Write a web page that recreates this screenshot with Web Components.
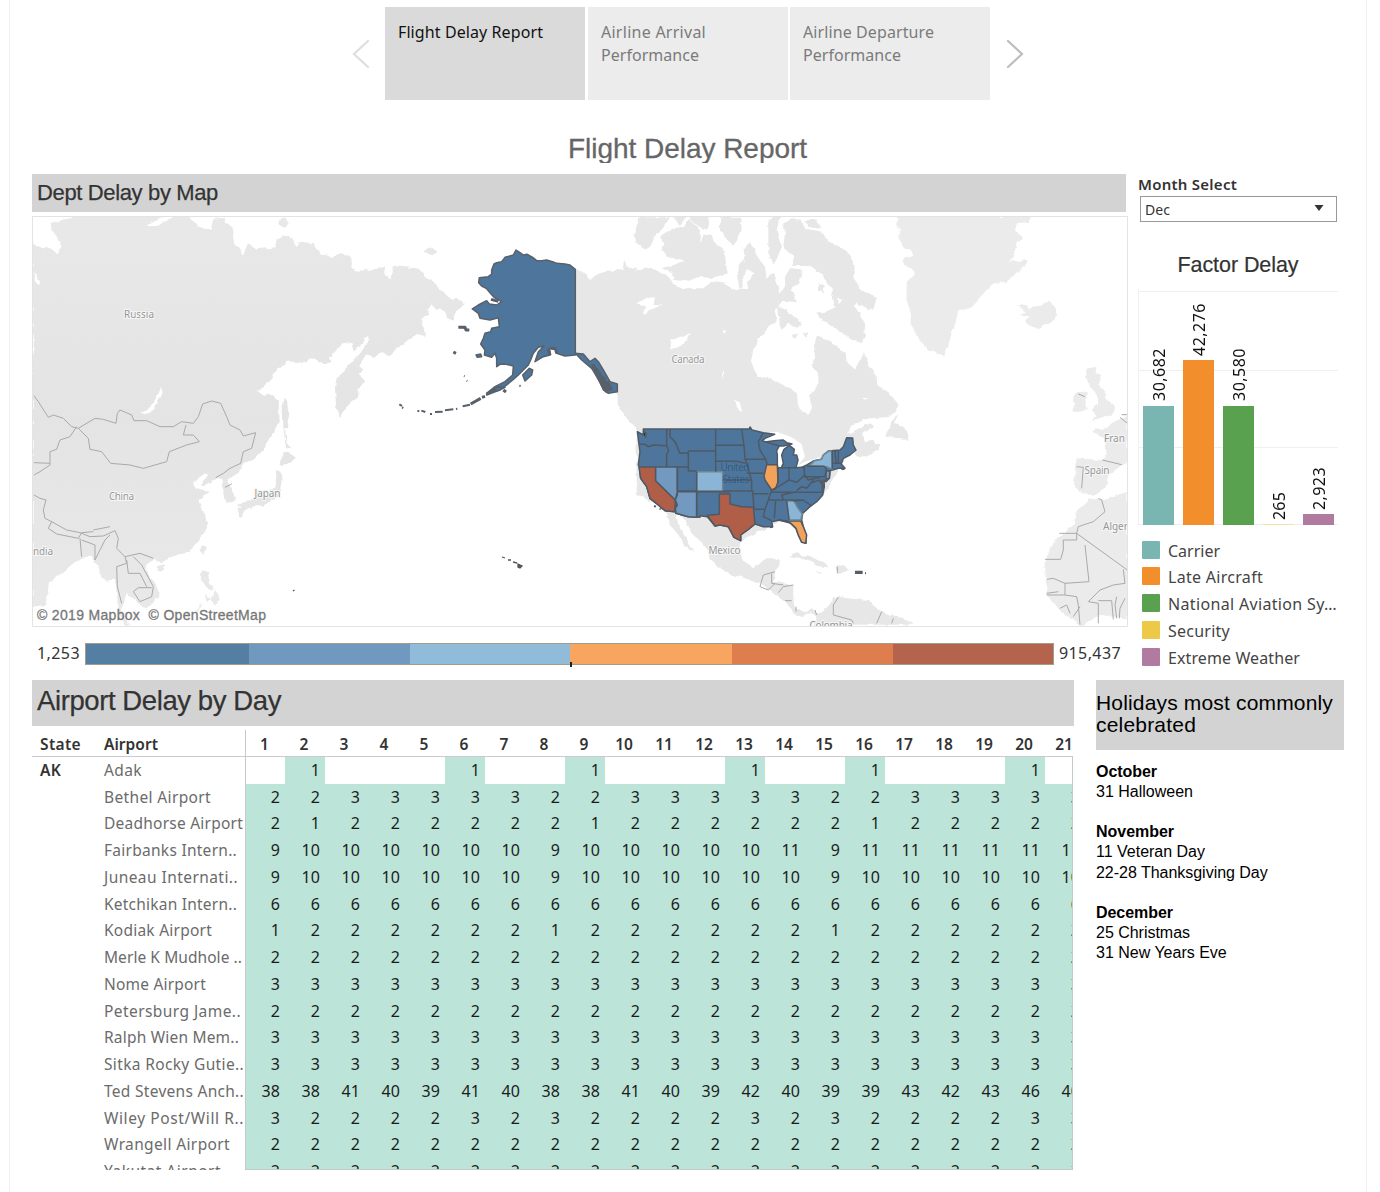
<!DOCTYPE html>
<html lang="en">
<head>
<meta charset="utf-8">
<title>Flight Delay Report</title>
<style>
html,body{margin:0;padding:0;background:#fff}
body{width:1380px;height:1192px;overflow:hidden;font-family:"Noto Sans","Open Sans",sans-serif;color:#333}
</style>
</head>
<body>
<delay-dashboard></delay-dashboard>
<script>
const mk = (name, html, after) => customElements.define(name, class extends HTMLElement {
  connectedCallback() {
    if (this.shadowRoot) return;
    const root = this.attachShadow({ mode: 'open' });
    root.innerHTML = typeof html === 'function' ? html(this) : html;
    if (after) after(this, root);
  }
});

/* Single-line text tracked so that it fills a given width */
const ctx = document.createElement('canvas').getContext('2d');
mk('fit-text', '<style>:host{display:inline-block;white-space:pre}</style><slot></slot>', el => {
  const s = getComputedStyle(el), t = el.textContent;
  ctx.font = `${s.fontWeight} ${s.fontSize} ${s.fontFamily}`;
  el.style.letterSpacing = ((+el.getAttribute('w') - ctx.measureText(t).width) / t.length).toFixed(3) + 'px';
});

mk('story-tab', `<style>
:host{display:block;box-sizing:border-box;width:200px;height:93px;padding:14px 13px;background:#ececec;color:#7b7b7b;font-size:16px;line-height:23px}
:host([active]){background:#dadada;color:#111}
::slotted(*){display:block!important}
</style><slot></slot>`);

mk('story-nav', `<style>
:host{display:flex;height:93px;padding:7px 0 0 342px}
svg{width:20px;height:32px;margin-top:31px;fill:none;stroke-width:2.2;stroke-linecap:round}
.l{stroke:#dedede;margin-right:13px}.r{stroke:#bdbdbd;margin-left:14px}
.g3{margin-left:3px}.g2{margin-left:2px}
</style>
<svg class="l" viewBox="0 0 20 32"><path d="M16 3 2 16 16 29"/></svg>
<story-tab active><fit-text w="145">Flight Delay Report</fit-text></story-tab>
<story-tab class="g3"><fit-text w="105">Airline Arrival</fit-text><fit-text w="98">Performance</fit-text></story-tab>
<story-tab class="g2"><fit-text w="131">Airline Departure</fit-text><fit-text w="98">Performance</fit-text></story-tab>
<svg class="r" viewBox="0 0 20 32"><path d="M4 3 18 16 4 29"/></svg>`);

mk('section-bar', `<style>
:host{display:block;box-sizing:border-box;background:#d3d3d3;color:#333;padding-left:5px;font-family:"Liberation Sans",Arial,sans-serif;-webkit-text-stroke:.25px #333}
</style><slot></slot>`);

/* Map geometry is drawn at 3 units per pixel */
const LAND = `
M130 18 L122 27 95 33 62 38 65 62 85 85 95 110 85 137 70 118 50 112 38 122 12 100 8 110 8 1190 45 1185 55 1150 60 1115 95 1090 130 1060 160 1042 185 1040 195 1055 210 1080 218 1105 235 1115 250 1105 262 1130 262 1200 285 1244 300 1244 272 1205 290 1150 310 1165 335 1190 350 1195 385 1160 385 1130 360 1105 345 1080 355 1055 372 1047 380 1055 395 1060 410 1045 445 1035 480 1025 500 1000 520 970 535 940 525 925 520 900 505 870 540 845 500 840 487 818 525 790 535 795 514 820 516 832 556 805 580 812 575 825 583 850 590 880 612 880 618 866 605 835 592 818 600 805 630 785 640 760 670 750 700 720 730 670 748 630 750 575 712 548 700 555 685 545 725 505 745 475 770 455 830 455 840 445 860 448 870 460 905 458 900 440 945 395 965 400 970 422 1000 400 1003 380 1015 378 1015 390 990 430 960 465 930 490 915 530 918 590 930 620 945 605 955 585 985 560 985 540 1002 515 990 495 1000 480 988 465 1010 435 1030 440 1060 428 1080 438 1120 400 1160 372 1185 378 1180 345 1172 325 1198 318 1192 300 1205 283 1215 298 1240 300 1255 325 1275 332 1275 305 1305 285 1280 260 1265 272 1240 245 1210 215 1160 175 1125 172 1088 168 1088 190 1078 205 1065 195 1062 180 1070 168 1060 175 985 182 965 175 960 145 940 130 905 138 870 135 850 100 810 95 800 108 785 85 760 75 740 88 735 112 680 118 652 102 638 140 615 95 608 50 585 38 580 25 560 22 552 30 545 60 500 45 480 20 440 18 405 32 385 48 355 48 375 32 400 18z
M748 30 765 25 776 42 760 50 745 42z M1180 125 1195 113 1215 118 1218 130 1195 135z
M765 560 772 580 778 655 765 655 770 700 785 715 768 715 760 650 758 590z
M762 725 775 730 798 742 780 760 755 765 748 760z M742 780 755 785 758 820 745 860 700 888 660 890 640 905 625 885 660 868 690 865 715 850 735 825z M622 893 642 895 640 920 630 925z M655 885 675 880 665 895z
M520 1005 530 1010 522 1035 512 1025z M385 1070 405 1065 395 1085 383 1080z M515 1085 537 1085 535 1115 550 1140 525 1130 512 1115z M525 1155 545 1165 530 1180z M555 1140 568 1160 560 1185 545 1170z M480 1215 520 1180 510 1195z`;

const AMERICA = `
M500 170 L555 178 580 185 605 208 620 190 650 182 700 180 705 152 720 175 740 170 740 185 765 172 790 178 835 200 855 225 885 235 940 235 965 215 1000 220 1030 238 1068 240 1075 215 1090 190 1065 175 1062 120 1080 95 1105 145 1125 170 1130 205 1150 190 1155 210 1170 248 1185 230 1185 200 1200 175 1235 178 1230 215 1205 240 1215 265 1225 280 1180 275 1155 300 1160 335 1135 350 1110 380 1090 420 1082 460 1105 500 1140 505 1190 530 1220 545 1225 590 1255 615 1263 600 1260 560 1285 525 1285 500 1265 465 1275 440 1272 400 1285 380 1315 390 1350 415 1368 430 1370 460 1395 475 1422 430 1440 470 1460 500 1462 525 1500 550 1522 575 1522 605 1490 622 1440 625 1390 642 1370 675 1380 668 1440 640 1452 648 1420 672 1425 700 1450 690 1455 705 1475 705 1465 715 1430 740 1408 745 1400 735 1390 715
L1350 770 1300 860 1230 910 1240 960 1180 930 1055 990 1048 1020 1060 1055 1090 1075 1115 1060 1125 1048 1170 1048 1168 1065 1155 1085 1152 1115 1210 1125 1210 1170 1215 1195 1240 1210 1265 1195 1285 1210 1280 1222 1260 1205 1240 1222 1215 1215 1180 1170 1145 1145 1115 1120 1065 1105 1030 1095 990 1075 960 1050 955 1025 935 1000 905 970 885 930 870 915 855 905 865 940 900 1005 912 1028 885 1010 870 980 840 945 830 905 740 850 740 665 700 610 680 580 680 550 600 450 540 430z
M750 22 L840 22 820 55 795 75 780 110 765 120 735 95 730 75z M810 80 850 55 880 50 900 30 930 60 935 100 945 70 960 75 975 100 1000 120 1005 160 1010 190 965 205 925 200 900 215 850 210 850 190 815 175 885 155 830 140 815 120 820 100z M850 22 890 20 870 45z M895 20 960 20 950 60 920 45z M990 20 1050 20 1055 60 1030 110 1015 90 990 60z M1040 185 1060 150 1070 170 1055 240 1045 220z M1135 35 1150 20 1170 20 1160 60 1175 120 1150 165 1135 130z
M1180 40 1205 25 1235 30 1245 55 1295 65 1315 90 1380 130 1395 180 1390 200 1415 240 1460 265 1450 290 1435 300 1400 280 1395 290 1420 330 1425 375 1415 400 1380 385 1335 355 1285 325 1278 305 1310 310 1335 290 1325 240 1295 190 1255 165 1210 165 1215 140 1180 110 1185 70z M1245 30 1275 30 1295 55 1255 50z
M1165 290 1190 300 1240 345 1210 350 1195 340 1170 360z M1205 375 1225 370 1215 388z M1285 222 1305 225 1300 248 1282 240z M1240 375 1255 365 1250 382z
M1525 612 1515 640 1550 660 1558 690 1530 685 1490 680 1500 640z
M1195 1040 1215 1028 1270 1040 1310 1062 1315 1072 1285 1068 1245 1045z M1335 1070 1360 1068 1380 1080 1345 1092z M1275 1087 1295 1087 1290 1092z
M1330 1165 1345 1160 1370 1165 1440 1170 1460 1195 1490 1210 1540 1225 1570 1244 1275 1244 1285 1210 1310 1190z`;

const ATLANTIC = `
M470 18 L480 60 475 80 495 115 515 120 520 135 485 145 490 160 515 175 525 195 500 215 500 270 515 320 515 350 540 390 565 420 612 440 625 405 635 370 650 330 655 300 690 295 740 240 755 225 800 215 855 165 860 150 808 155 825 125 830 95 850 85 825 65 830 40 870 35 875 18z
M835 285 L865 285 865 300 885 290 925 278 950 290 952 315 930 335 895 355 865 345 855 330 865 318 840 318 860 305z
M1045 475 L1070 470 1065 490 1085 495 1075 525 1095 545 1100 570 1125 590 1115 615 1085 625 1050 635 1070 615 1055 600 1075 580 1065 545 1050 535 1045 510 1038 500z M1015 545 1040 545 1040 600 1000 608 995 600 1010 580 998 570z
M1162 612 L1140 625 1115 640 1100 655 1060 660 1065 672 1095 680 1100 735 1090 750 1010 745 1005 775 1002 835 1045 855 1075 850 1105 820 1105 795 1140 770 1162 760z
M1162 845 L1100 868 1045 865 1010 905 1000 945 950 985 925 1030 915 1060 920 1155 950 1190 975 1215 1020 1244 1030 1244 1080 1215 1162 1225z`;

const BORDERS = `
M12 557 L25 575 55 622 70 615 100 625 125 650 145 655 195 625 220 628 258 640 262 610 270 600 305 615 312 632 350 632 390 650 430 650 455 635 490 640 505 620 518 582 545 573 572 580 590 620 600 645 630 660 640 678 677 668 665 715 640 725 632 760 600 775 580 790 557 803
M145 655 L175 685 180 718 215 725 242 760 300 765 340 775 410 755 418 725 470 705 508 695 490 675 460 675 468 645
M140 650 L120 680 90 690 80 718 60 725 60 765 30 785 12 795 M12 758 60 760 M585 832 605 822
M12 855 L30 865 48 870 40 900 45 925 65 935 110 960 150 968 180 980 220 978 255 962 265 985 260 1015 285 1040 330 1030 370 1045
M65 935 L55 955 80 972 145 985 155 968 190 965 M150 985 L155 1040 M155 990 195 1005 195 1050 225 990 240 975 M190 960 240 950
M285 1040 L290 1060 260 1070 262 1130 275 1180 M290 1050 295 1090 330 1090 350 1130 M310 1040 335 1065 370 1130 365 1160 330 1175 310 1145 325 1133 365 1133`;
const WBORDERS = `
M958 970 L1010 970 1010 990 970 990 970 1020 962 1048 915 1048 M1010 970 L1015 950 1060 935 1095 905 1085 870 1075 865 M1010 970 L1162 1080 M1035 1005 L1047 1115 975 1120 940 1105 920 1108 M975 1120 L975 1155 920 1155 M975 1155 L1010 1160 1015 1185 1020 1244 M1045 1175 L1080 1140 1120 1125 1155 1120 1150 1078 M1045 1175 1075 1180 1075 1240 M1075 1172 1115 1172 1120 1228 M1130 1160 L1125 1185 1130 1225 M1155 1165 1140 1195 1138 1225 M920 1150 955 1145 M960 1195 980 1185 990 1210 M1000 1220 1020 1190
M1010 770 1030 772 1025 835 M1087 750 1145 764 M1140 622 1162 640 M1145 614 1162 614 M1015 552 1035 560
M295 1162 L280 1185 280 1215 335 1230 340 1240 M425 1205 L410 1240 M460 1225 455 1240 M292 1070 V1090
M105 1085 70 1095 60 1130 85 1140 105 1120 M95 1090 95 1120 130 1125 M115 1148 130 1130 160 1125 M135 1172 155 1172 M168 1190 168 1205 M225 1200 230 1215`;

mk('delay-map', `<style>
:host{display:block;box-sizing:border-box;width:1096px;height:411px;border:1px solid #e3e3e3}
svg{display:block;width:1094px;height:409px}
.lb text{font:10px "Noto Sans",sans-serif;fill:#969696;stroke:#f6f6f6;stroke-width:2px;paint-order:stroke;text-anchor:middle}
</style>
<svg viewBox="33 217 1094 409">
<defs>
<filter id="coast" x="0" y="0" width="100%" height="100%"><feTurbulence type="fractalNoise" baseFrequency=".13" numOctaves="2" seed="4"/><feDisplacementMap in="SourceGraphic" scale="5" xChannelSelector="R" yChannelSelector="G"/></filter>
<filter id="edge"><feTurbulence type="fractalNoise" baseFrequency=".3" numOctaves="2" seed="7"/><feDisplacementMap in="SourceGraphic" scale="4" xChannelSelector="R" yChannelSelector="G"/></filter>
<linearGradient id="asia" x2="0" y2="1"><stop offset="0" stop-color="#e8e8e8"/><stop offset=".5" stop-color="#e4e4e4"/><stop offset="1" stop-color="#e9e9e9"/></linearGradient>
</defs>
<g filter="url(#coast)"><rect x="33" y="217" width="1094" height="409" fill="#fff"/><g transform="translate(30 210) scale(.33333)">
<path fill="url(#asia)" d="${LAND}"/>
<g fill="#fff"><path d="M393 530 398 550 375 595 345 612 328 610 360 590 378 565z M10 190 30 210 28 228 15 210z"/></g>
<g transform="translate(1080 0)"><path fill="#e7e7e7" d="${AMERICA}"/>
<path fill="#fff" d="M740 280 765 265 795 262 790 285 818 285 785 300 765 315 755 310 770 290z M838 385 868 385 900 372 885 395 870 410 845 418z M1000 360 1012 362 1005 372z M1035 570 1045 575 1055 605 1040 590z M995 485 1002 490 998 505z M650 565 660 570 665 605 655 600z M1340 262 1360 270 1350 282z M1415 560 1435 562 1425 566z"/></g>
<g transform="translate(2130 0)"><path fill="#ebebeb" d="${ATLANTIC}"/></g>
</g></g>
<g transform="translate(30 210) scale(.33333)" fill="none" stroke="#a9a9a9" stroke-width="3" stroke-linejoin="round">
<path filter="url(#edge)" d="${BORDERS}"/><path transform="translate(2130 0)" d="${WBORDERS}"/></g>

<g transform="translate(390 210) scale(.33333)" fill="#4e769c" stroke="#58606a" stroke-width="4.500" stroke-linejoin="round">
<path d="M556 178 540 165 525 162 500 160 490 156 470 150 455 152 440 152 428 142 420 138 412 133 400 135 390 128 378 120 370 135 345 142 335 155 320 158 312 162 305 180 305 192 295 200 268 203 266 218 275 228 290 236 300 248 312 262 335 275 320 285 298 282 290 272 265 285 247 297 265 310 270 325 300 330 325 323 328 350 305 355 302 365 285 370 280 385 272 402 285 420 283 435 305 442 315 430 320 445 320 470 330 463 345 462 370 468 368 495 345 515 315 530 290 550 310 545 330 540 350 525 370 508 385 495 400 480 415 465 422 450 430 430 445 412 462 408 445 425 435 455 460 440 480 435 478 415 495 415 500 430 525 438 556 435z"/>
<path d="M556 430 580 432 600 455 615 445 625 455 640 480 660 515 682 522 682 545 655 550 640 540 630 515 605 475 575 450z"/>
<path d="M398 495 418 475 428 480 425 495 405 513z M258 435 272 432 275 440 262 442z M290 552 325 530 345 532 325 542 290 555z"/>
<path fill="none" stroke-width="12" d="M608 462 622 495 638 525 652 545 M620 480 640 515 660 540 M615 475 632 500 645 530"/>
<path stroke-width="9" d="M618 475 635 510 M628 488 645 540 M640 500 655 542 M652 515 665 540 M303 268 325 274 M205 352 225 352 228 360 238 360 M190 426 198 430 M242 582 272 565 M276 562 285 559 M290 552 318 538 M340 540 348 546 M476 418 480 436 M497 418 500 430 M482 415 497 416"/>
<path stroke-width="6" d="M28 583 36 588 M36 592 40 594 M82 602 88 604 M94 602 106 606 M120 612 126 612 M135 606 158 605 M165 601 190 598 M198 597 202 596 M218 589 240 584 M222 498 224 499 M230 512 232 513 M388 527 392 528"/>
</g>
<g transform="translate(620 400) scale(.33333)">
<g fill="#fff"><path d="M405 122 440 98 470 95 515 112 545 132 555 170 530 200 480 210 460 180 470 140z"/><path d="M525 200 555 185 600 172 600 190 545 208z"/></g>
<g stroke="#4f5964" stroke-width="4.5" stroke-linejoin="round">
<path id="us" fill="#4e769c" d="M70 87 388 87 390 81 396 90 430 98 464 103 435 115 427 122 445 128 470 133 478 138 470 152 472 165 472 192 473 203 484 203 490 190 485 165 492 148 508 136 523 148 520 165 530 165 534 180 528 203 545 202 562 194 582 182 605 178 610 165 625 153 660 150 670 140 680 113 698 114 700 135 708 150 690 165 670 175 664 192 675 205 655 205 630 212 628 235 618 245 612 240 613 260 608 285 590 305 570 320 548 340 545 360 550 380 558 405 558 430 545 425 535 405 528 385 510 368 480 360 455 365 458 380 430 380 405 372 385 388 362 405 362 422 342 412 325 380 300 375 285 378 262 350 240 347 240 352 205 350 168 340 165 335 135 332 115 315 90 295 80 260 62 235 58 200 55 195 60 155 52 95 70 105z"/>
<path fill="#4e769c" d="M440 125 462 122 490 120 500 128 516 132 490 138 480 138 460 133z"/>
<path fill="#b15e48" d="M57 201 107 201 107 242 166 300 165 335 135 332 115 315 90 295 80 260 62 235z"/>
<path fill="#7299c0" d="M107 201 172 201 172 285 166 300 107 242z M172 275 230 275 230 352 205 350 168 340 166 325 172 315 166 300z"/>
<path fill="#8ab5d6" stroke="#6f8794" d="M230 215 308 215 308 272 230 272z"/>
<path fill="#b15e48" d="M298 282 330 282 330 312 365 320 400 322 403 350 405 372 385 388 362 405 362 422 342 412 325 380 300 375 285 378 262 346 298 343z"/>
<path fill="#f3a25a" d="M440 194 472 194 474 245 466 268 455 270 435 240 432 228z M476 360 508 363 542 362 550 380 560 405 557 430 545 427 535 405 528 385 510 368z"/>
<path fill="#8ab5d6" stroke="#6f8794" d="M500 303 522 303 532 322 547 342 542 360 507 360z M568 197 584 182 605 178 610 165 625 154 635 152 637 208 620 200z"/>
<path fill="#7299c0" d="M618 213 630 212 628 235 618 238z"/>
<path fill="none" d="M58 133 75 133 85 140 100 135 140 137 M140 87V137L146 152 140 165V200 M172 201H205 M150 87V110L165 125 180 160 205 158 M205 153H285 M205 153V213H230 M287 87V215 M287 136H370 M287 184H350L376 190 M365 87 372 136 375 178H437 M430 98 415 125 420 150 437 178 442 194 M380 220H430 M308 240H392 M376 178 385 205 395 245V275 M172 273H230 M308 273H400 M172 273V200 M230 215V350 M230 275H330 M398 275 402 325 M400 328H435 M398 281H445 M455 270 445 300 435 328 430 350 455 362 M445 300H550 M452 277H608 M467 300 463 355 M500 303 507 360 M474 203V250 M507 203V240 M455 270 480 257 507 240 530 247 555 225 M553 200V230H615 M528 203H484 M560 199H612L620 208 615 228 M637 152V208 M655 150V190 M637 190H664 M645 152 648 190 M520 303 550 300 575 318 M530 272 545 260 560 265 580 240 M555 225 565 240 600 232 M570 250 598 240 612 265 M490 300 485 285 530 275 M605 238 610 262 M545 202 555 205"/>
</g>
<g stroke="#565d65" stroke-width="6"><path d="M70 94 78 100 76 114 M102 318 108 320 M120 325 122 329 M606 240 608 275 M664 207 674 207 M705 515H728M705 519H728M735 520H738 M450 382 458 380"/></g>
</g>
<g fill="#555" stroke="#555" stroke-width="1.300"><path d="M502 557 505 558M508 560 511 560M513 562 517 563M518 564 522 566 520 568 518 567z M293 591 294.500 590"/></g>
<g class="lb">
<text x="139" y="318" textLength="30">Russia</text><text x="121.500" y="500" textLength="25">China</text><text x="267.500" y="497" textLength="26">Japan</text>
<text x="43" y="555" textLength="20">ndia</text><text x="688" y="363" textLength="33">Canada</text><text x="724.500" y="554" textLength="32">Mexico</text>
<text x="1097" y="474" textLength="25">Spain</text><text style="text-anchor:start" x="1104" y="442">Fran</text><text style="text-anchor:start" x="1103" y="530">Alger</text><text x="831" y="629" textLength="43">Colombia</text>
<g style="opacity:.7"><text style="fill:#2d5577;stroke:none" x="735" y="471" textLength="29">United</text><text style="fill:#2d5577;stroke:none" x="736" y="483" textLength="27">States</text></g></g>
<text x="37" y="620" textLength="229" style="font:14px 'Liberation Sans',Arial,sans-serif;white-space:pre" fill="#777" stroke="#777" stroke-width=".3">© 2019 Mapbox  © OpenStreetMap</text>
</svg>`);

mk('color-scale', `<style>
:host{display:flex;height:22px;font-size:16px;line-height:20px;padding:16px 0 0 5px}
.ramp{display:grid;grid-template-columns:163px 161px 160px 162px 161px 160px;grid-template-rows:20px;box-sizing:border-box;width:969px;height:22px;border:1px solid #a59c90;margin:0 5px}
.tick{width:1.5px;background:#222;height:5px;margin-top:18px}
i{display:flow-root}
</style><fit-text w="43">1,253</fit-text><div class="ramp">
<i style="background:#557ea3"></i><i style="background:#7199bf"></i><i style="background:#90bcda"></i><i style="background:#f8a65f"><div class="tick"></div></i><i style="background:#de7d4e"></i><i style="background:#b4644c"></i></div><fit-text w="62">915,437</fit-text>`);

mk('month-select', `<style>
:host{display:block;height:48px}
b{display:block;font-size:15px;font-weight:600;line-height:21px;height:22px}
div{box-sizing:border-box;width:197px;height:26px;margin-left:2px;border:1px solid #999;display:flex;justify-content:space-between;align-items:center;padding:1px 12px 0 4px;font-size:14px;line-height:24px}
svg{width:10px;height:6px;margin-top:-3px}
</style><b><fit-text w="99">Month Select</fit-text></b><div><fit-text w="25">Dec</fit-text><svg viewBox="0 0 10 6"><path fill="#333" d="M.5 0h9L5 6z"/></svg></div>`);

mk('factor-chart', () => `<style>
:host{display:block;width:200px;height:236px;margin-top:11px}
.plot{display:flex;align-items:flex-end;gap:9px;box-sizing:border-box;height:236px;padding-left:4px;border-left:1px solid #f1f1f1;
background:linear-gradient(#efefef,#efefef) 0 2px/100% 1px no-repeat,linear-gradient(#efefef,#efefef) 0 81px/100% 1px no-repeat,linear-gradient(#efefef,#efefef) 0 158px/100% 1px no-repeat,linear-gradient(#efefef,#efefef) 0 235px/100% 1px no-repeat}
.c{width:31px;display:flex;flex-direction:column;align-items:center}
.v{writing-mode:vertical-rl;transform:rotate(180deg);font-size:16px;line-height:22px;color:#111;margin-bottom:4px}
.b{width:31px}
</style><div class="plot">${[['30,682',53,119.5,'#79b6b1'],['42,276',53,165,'#f28e2c'],['30,580',53,119.5,'#59a14f'],['265',28,1,'#f4e3a8'],['2,923',43,11,'#b07aa1']]
.map(([v,w,h,c]) => `<div class="c"><fit-text class="v" w="${w}">${v}</fit-text><div class="b" style="height:${h}px;background:${c}"></div></div>`).join('')}</div>`);

mk('factor-legend', () => `<style>
:host{display:block;padding:12.500px 0 0 4px}
div{display:flex;height:26.75px;font-size:16px;line-height:27.500px;gap:8px;color:#444}
i{width:18px;height:18px;border-radius:1px;margin-top:3px}
</style>${[['#79b6b1','Carrier',52],['#f28e2c','Late Aircraft',95],['#59a14f','National Aviation Sy…',169],['#edc948','Security',62],['#b07aa1','Extreme Weather',132]]
.map(([c,t,w]) => `<div><i style="background:${c}"></i><fit-text w="${w}">${t}</fit-text></div>`).join('')}`);

const rep = n => Array(21).fill(n);
const ROWS = [
['Adak',38,rep('').map((v,i)=>[1,5,8,12,15,19].includes(i)?1:'')],
['Bethel Airport',107,[2,2,3,3,3,3,3,2,2,3,3,3,3,3,2,2,3,3,3,3,3]],
['Deadhorse Airport',139,[2,1,2,2,2,2,2,2,1,2,2,2,2,2,2,1,2,2,2,2,2]],
['Fairbanks Intern..',133,[9,10,10,10,10,10,10,9,10,10,10,10,10,11,9,11,11,11,11,11,11]],
['Juneau Internati..',134,[9,10,10,10,10,10,10,9,10,10,10,10,10,10,9,10,10,10,10,10,10]],
['Ketchikan Intern..',133,rep(6)],
['Kodiak Airport',108,[1,2,2,2,2,2,2,1,2,2,2,2,2,2,1,2,2,2,2,2,2]],
['Merle K Mudhole ..',138,rep(2)],
['Nome Airport',102,rep(3)],
['Petersburg Jame..',137,rep(2)],
['Ralph Wien Mem..',135,rep(3)],
['Sitka Rocky Gutie..',140,rep(3)],
['Ted Stevens Anch..',140,[38,38,41,40,39,41,40,38,38,41,40,39,42,40,39,39,43,42,43,46,40]],
['Wiley Post/Will R..',140,[3,2,2,2,2,3,2,3,2,2,2,2,3,2,3,2,2,2,2,3,3]],
['Wrangell Airport',126,rep(2)],
['Yakutat Airport',117,rep(2)]];

mk('airport-table', () => `<style>
:host{display:block;width:1041px;height:440px;margin-top:4px;overflow:hidden;font-size:16px;position:relative}
.r{display:grid;grid-template-columns:72px 141px repeat(21,40px);width:1053px;height:26.74px;line-height:26.74px}
.h{font-weight:600;height:26px;line-height:28px;border-bottom:1.500px solid #cacaca;font-size:15.500px}
.h>*:nth-child(n+3){text-align:center;padding-right:2px}
.h>*:nth-child(3),.r>*:nth-child(3){border-left:1.500px solid #c8c8c8;box-sizing:border-box}
.s{font-weight:600;padding-left:8px;font-size:15.500px}
.n{color:#6b6b6b;white-space:nowrap;font-size:15.500px}
.d{text-align:right;padding-right:5px;color:#1c1c1c;background:#bce4d8;font-size:16px;letter-spacing:.1px}
.e{background:#fff}
.edge{position:absolute;right:0;left:213px;top:27px;bottom:0;border:solid #c0cbc7;border-width:0 1px 1px 0}
</style><div class="r h"><span class="s"><fit-text w="41">State</fit-text></span><span><fit-text w="54">Airport</fit-text></span>${rep(0).map((_,i)=>`<span>${i+1}</span>`).join('')}</div>
${ROWS.map(([n,w,v],k)=>`<div class="r"><span class="s">${k?'':'<fit-text w="21">AK</fit-text>'}</span><span class="n"><fit-text w="${w}">${n}</fit-text></span>${v.map(x=>`<span class="d${x===''?' e':''}">${x}</span>`).join('')}</div>`).join('')}<div class="edge"></div>`);

mk('holiday-panel', `<style>
:host{display:block;width:248px;font-family:"Liberation Sans",Arial,sans-serif;color:#000}
h3{margin:0 0 12px;background:#d3d3d3;height:58px;padding-top:12px;font-weight:400;font-size:21px;line-height:22px}
h3 fit-text,p fit-text{display:block}
p{margin:0 0 20.200px;font-size:16px;line-height:20.100px}
b{display:block}
</style><h3><fit-text w="237">Holidays most commonly</fit-text><fit-text w="100">celebrated</fit-text></h3>
<p><b><fit-text w="61">October</fit-text></b><fit-text w="97">31 Halloween</fit-text></p>
<p><b><fit-text w="78">November</fit-text></b><fit-text w="109">11 Veteran Day</fit-text><fit-text w="172">22-28 Thanksgiving Day</fit-text></p>
<p><b><fit-text w="77">December</fit-text></b><fit-text w="94">25 Christmas</fit-text><fit-text w="131">31 New Years Eve</fit-text></p>`);

mk('delay-dashboard', `<style>
:host{display:block;box-sizing:border-box;width:1358px;height:1192px;margin-left:9px;border:solid #f0f0f0;border-width:0 1px;overflow:hidden}
h1{margin:32px 0 11px 558px;height:31px;overflow:hidden;font:400 28px/34px "Liberation Sans",Arial,sans-serif;color:#666;-webkit-text-stroke:.3px #666}
.top,.bottom{display:flex;padding-left:22px}
.top{height:506px}
.left{width:1096px;margin-right:10px}
.right{width:206px}
.map-title{width:1094px;height:38px;font-size:22px;line-height:38px;margin-bottom:4px}
h2{margin:30px 0 0;width:200px;text-align:center;font:400 21.500px/26px "Liberation Sans",Arial,sans-serif;color:#333;-webkit-text-stroke:.2px #333}
.day{width:1042px;margin-right:22px}
.day-title{height:46px;font-size:27.500px;line-height:42px}
</style>
<story-nav></story-nav>
<h1><fit-text w="239">Flight Delay Report</fit-text></h1>
<div class="top"><div class="left"><section-bar class="map-title"><fit-text w="181">Dept Delay by Map</fit-text></section-bar><delay-map></delay-map><color-scale></color-scale></div>
<div class="right"><month-select></month-select><h2><fit-text w="121">Factor Delay</fit-text></h2><factor-chart></factor-chart><factor-legend></factor-legend></div></div>
<div class="bottom"><div class="day"><section-bar class="day-title"><fit-text w="244">Airport Delay by Day</fit-text></section-bar><airport-table></airport-table></div><holiday-panel></holiday-panel></div>`);
</script>
</body>
</html>
